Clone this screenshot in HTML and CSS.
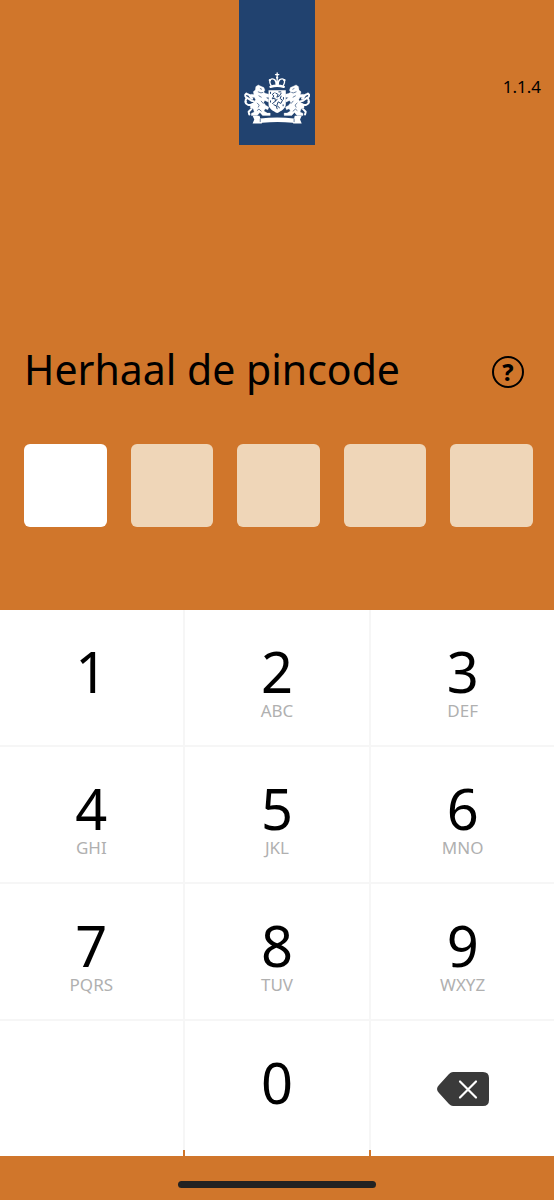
FILE: index.html
```html
<!DOCTYPE html>
<html lang="nl">
<head>
<meta charset="utf-8">
<meta name="viewport" content="width=device-width, initial-scale=1">
<title>Herhaal de pincode</title>
<link rel="stylesheet" href="styles.css">
</head>
<body>
<main class="screen">
  <header class="header">
    <div class="banner">
      <svg class="crest" viewBox="25 30 205 170" fill="none" stroke-linecap="round" stroke-linejoin="round" role="img" aria-label="Rijkswapen">
        <!-- crown -->
        <g stroke="#fff" stroke-width="4">
          <path d="M128 38v11M123 43h10"/>
          <path d="M110 76c-10-16 0-24 10-18 3 2 5 8 5 16M146 76c10-16 0-24-10-18-3 2-5 8-5 16M128 52v22"/>
          <path d="M108 80q20-7 40 0" stroke-width="7"/>
          <path d="M106 60v.1M150 60v.1M128 52v.1" stroke-width="7"/>
        </g>
        <!-- shield -->
        <path d="M102 90h52v42c0 14-15 21-26 27-11-6-26-13-26-27z" fill="#fff"/>
        <g stroke="#21426f" stroke-width="3">
          <path d="M119 98l-6 5 5 4-5 9 8-2 2 9-9 7M124 99l7 4-4 8 8-4 5-8M140 108l-3 7 7 5-5 10-8-5-4 11 8 7M118 134l7 3 3 9M128 117l-5 6"/>
          <path d="M108 96v4M147 112v5M108 122v4M146 134v3M133 95h6"/>
        </g>
        <!-- lions -->
        <g id="lion">
          <path d="M64 79l7-5 8 4 9 4 3 8-4 6 7 4 9 2v9l-9 1 8 6v8l-11-5-4 6 7 9 9 5-3 8-8-3-4 7 10 6h9v7H84l-8-9-8 9H50v-6l9-4-3-9-9-4v-9l9-6 7-9-4-8-11 2-6-6 7-5 9 1-2-8 6-6z" fill="#fff" stroke="#fff" stroke-width="1"/>
          <path d="M57 123c-12 0-10-7-18-9-8-3-10-10-4-14 4 4 9 2 11 7s3 8 7 9M54 132c-9 6-21 2-22-7M39 113c-5 2-8 7-5 12M50 147l-8 8 2 8" stroke="#fff" stroke-width="6"/>
          <path d="M77 85l4 2M71 95l8 3 5-1M73 107l7 4M68 129l6 6-3 6M80 123l6 7M68 151l5-4 7 6" stroke="#21426f" stroke-width="2"/>
        </g>
        <use href="#lion" transform="matrix(-1 0 0 1 256 0)"/>
        <!-- ribbon -->
        <path d="M54 167h21l2 8q51-6 102 0l2-8h21l-5 11 5 12h-25l-2-2q-46-5-92 0l-2 2H54l5-12z" fill="#fff"/>
        <path d="M77 177v8M179 177v8" stroke="#21426f" stroke-width="2"/>
      </svg>
    </div>
    <span class="version">1.1.4</span>
  </header>

  <section class="entry">
    <div class="title-row">
      <h1 class="title" id="title">Herhaal de pincode</h1>
      <button class="help" type="button" aria-label="Help">?</button>
    </div>
    <div class="pins" role="group" aria-labelledby="title">
      <input class="pin pin-active" type="password" inputmode="numeric" maxlength="1" aria-label="Cijfer 1">
      <input class="pin" type="password" inputmode="numeric" maxlength="1" aria-label="Cijfer 2">
      <input class="pin" type="password" inputmode="numeric" maxlength="1" aria-label="Cijfer 3">
      <input class="pin" type="password" inputmode="numeric" maxlength="1" aria-label="Cijfer 4">
      <input class="pin" type="password" inputmode="numeric" maxlength="1" aria-label="Cijfer 5">
    </div>
  </section>

  <section class="keypad" aria-label="Toetsen">
    <button class="key" type="button"><span class="digit">1</span></button>
    <button class="key" type="button"><span class="digit">2</span><span class="letters">ABC</span></button>
    <button class="key" type="button"><span class="digit">3</span><span class="letters">DEF</span></button>
    <button class="key" type="button"><span class="digit">4</span><span class="letters">GHI</span></button>
    <button class="key" type="button"><span class="digit">5</span><span class="letters">JKL</span></button>
    <button class="key" type="button"><span class="digit">6</span><span class="letters">MNO</span></button>
    <button class="key" type="button"><span class="digit">7</span><span class="letters">PQRS</span></button>
    <button class="key" type="button"><span class="digit">8</span><span class="letters">TUV</span></button>
    <button class="key" type="button"><span class="digit">9</span><span class="letters">WXYZ</span></button>
    <div class="key"></div>
    <button class="key" type="button"><span class="digit">0</span></button>
    <button class="key key-delete" type="button" aria-label="Wissen">
      <svg class="delete-icon" viewBox="0 0 52 34">
        <path d="M16 0h30q6 0 6 6v22q0 6-6 6H16q-2 0-4-2L2 21q-4-4 0-8L12 2q2-2 4-2z" fill="#3a3a3a"/>
        <path d="M23 9.500l16 16M39 9.500l-16 16" stroke="#fff" stroke-width="2.200" stroke-linecap="round"/>
      </svg>
    </button>
  </section>

  <footer class="footer"><div class="home-bar"></div></footer>
</main>
</body>
</html>
```
FILE: styles.css
```css
* {
  box-sizing: border-box;
}

body {
  margin: 0;
  background: #d0762b;
  color: #000;
  font-family: "Noto Sans", "Open Sans", sans-serif;
}

.screen {
  display: flex;
  flex-direction: column;
  min-height: 100vh;
}

.header {
  display: grid;
  grid-template-columns: 1fr auto 1fr;
  align-items: start;
}

.banner {
  grid-column: 2;
  width: 76px;
  padding: 70px 4px 18px;
  background: #21426f;
}

.crest {
  display: block;
  width: 100%;
  height: 57px;
}

.version {
  justify-self: end;
  padding: 75px 13px 0 0;
  font-size: 17px;
  line-height: 24px;
}

.entry {
  flex: 1;
  display: flex;
  flex-direction: column;
  justify-content: flex-end;
  gap: 44px;
  padding: 0 21px 83px 24px;
}

.title-row {
  display: flex;
  align-items: center;
  justify-content: space-between;
  padding-right: 9px;
}

.title {
  margin: 0;
  padding-bottom: 6px;
  font-size: 41px;
  line-height: 50px;
  font-weight: 400;
}

.help {
  width: 32px;
  height: 32px;
  padding: 0;
  border: 2px solid #000;
  border-radius: 50%;
  background: none;
  color: #000;
  font: 800 23px/28px "Noto Sans", sans-serif;
}

.pins {
  display: grid;
  grid-template-columns: repeat(5, 1fr);
  gap: 24px;
}

.pin {
  width: 100%;
  min-width: 0;
  aspect-ratio: 1;
  padding: 0;
  border: 0;
  border-radius: 6px;
  background: #efd6b8;
  font-size: 41px;
  text-align: center;
}

.pin-active {
  background: #fff;
}

.keypad {
  display: grid;
  grid-template-columns: 183fr 185fr 183fr;
  grid-auto-rows: 135px;
  gap: 2px;
  background: linear-gradient(to top, #d0762b 6px, #f6f6f6 6px);
}

.key {
  display: flex;
  flex-direction: column;
  align-items: center;
  justify-content: flex-start;
  gap: 3px;
  padding: 33px 0 0;
  border: 0;
  background: #fff;
  color: #000;
  font-family: inherit;
}

.digit {
  font-size: 56px;
  line-height: 56px;
}

.letters {
  color: #b0b0b0;
  font-size: 17px;
  line-height: 17px;
}

.key-delete {
  justify-content: center;
  padding: 0;
}

.delete-icon {
  width: 52px;
  height: 34px;
}

.footer {
  display: flex;
  justify-content: center;
  padding: 25px 0 12px;
}

.home-bar {
  width: 198px;
  height: 7px;
  border-radius: 4px;
  background: #222;
}
```
